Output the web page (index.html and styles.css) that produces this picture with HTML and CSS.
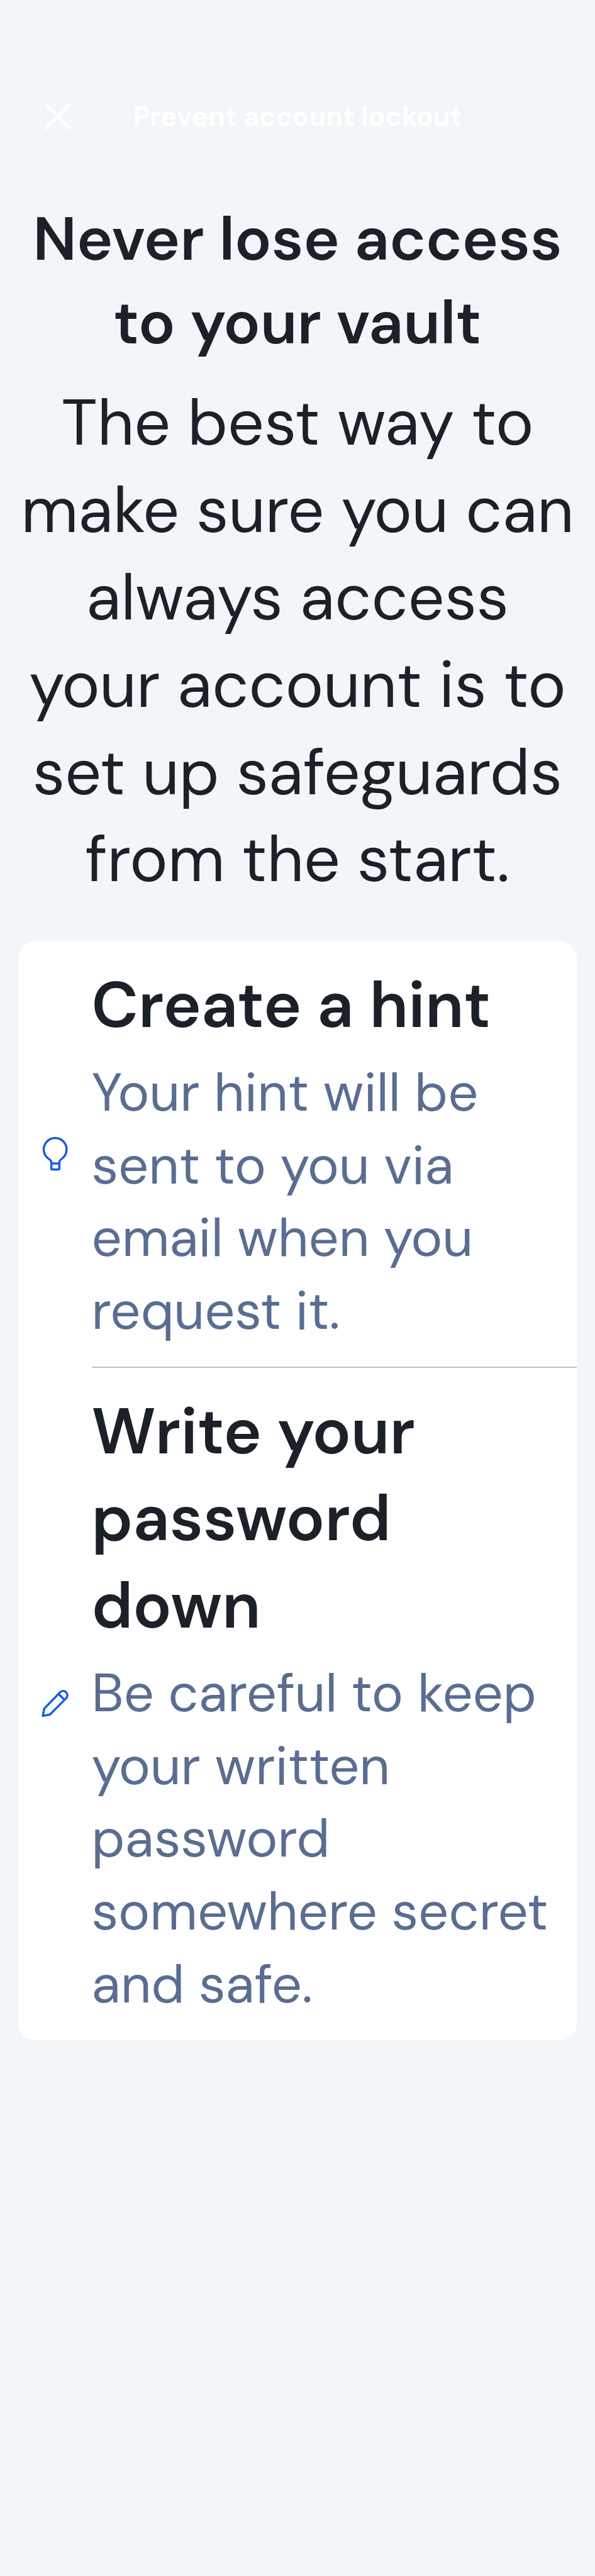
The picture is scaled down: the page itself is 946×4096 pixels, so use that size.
FILE: index.html
```html
<!DOCTYPE html>
<html lang="en">
<head>
<meta charset="utf-8">
<title>Prevent account lockout</title>
<link rel="stylesheet" href="styles.css">
</head>
<body>
<header class="nav">
  <svg class="icon close" viewBox="0 0 72 72" aria-label="Close"><path d="M12.3 12.3 59.7 59.7M59.7 12.3 12.3 59.7"/></svg>
  <div class="nav-title">Prevent account lockout</div>
</header>
<main>
  <h1 class="title">Never lose access<br>to your vault</h1>
  <p class="intro">The best way to<br>make sure you can<br>always access<br>your account is to<br>set up safeguards<br>from the start.</p>
  <section class="card">
    <div class="row">
      <svg class="icon" viewBox="11.9 24.5 72 72"><path d="M41.1 77.6V75.5C41.1 71.5 38 69.8 34.5 67.5A22.5 22.5 0 1 1 62.9 67.5C59.5 69.8 56.9 71.5 56.9 75.5V77.6M41.1 77.6H56.9V87.6a2 2 0 0 1-2 2H43.1a2 2 0 0 1-2-2Z"/></svg>
      <div class="content">
        <h2 class="heading">Create a hint</h2>
        <p class="text">Your hint will be<br>sent to you via<br>email when you<br>request it.</p>
      </div>
    </div>
    <div class="row">
      <svg class="icon" viewBox="11.9 24.6 72 72"><path d="M24.4 84.5 27.1 70.2 58.4 38A8.3 8.3 0 0 1 70.2 49.8L38.4 81.8ZM55.4 41.4 67 53"/></svg>
      <div class="content">
        <h2 class="heading">Write your<br>password<br>down</h2>
        <p class="text">Be careful to keep<br>your written<br>password<br>somewhere secret<br>and safe.</p>
      </div>
    </div>
  </section>
</main>
</body>
</html>
```
FILE: styles.css
```css
* { box-sizing: border-box; }
body {
  margin: 0;
  min-height: 4096px;
  background: #f2f6f9;
  color: #1b2029;
  font-family: "DM Sans", Lato, "Open Sans", sans-serif;
}
h1, h2, p { margin: 0; font-weight: 400; white-space: nowrap; }
.nav {
  display: grid;
  grid-template-columns: 1fr auto 1fr;
  align-items: center;
  height: 213.5px;
  padding-top: 155.5px;
  color: #fff;
}
.nav-title { font-size: 43.5px; line-height: 58px; font-weight: 700; white-space: nowrap; }
.icon {
  width: 58.2px;
  height: 58.2px;
  fill: none;
  stroke: #175ddc;
  stroke-width: 4.3;
  stroke-linejoin: round;
}
.close { margin-left: 62.8px; stroke: #fff; stroke-width: 5.4; stroke-linecap: round; }
.title {
  padding-top: 100.5px;
  font-size: 97px;
  line-height: 132.8px;
  font-weight: 600;
  text-align: center;
}
.intro {
  padding-top: 24.8px;
  font-size: 101.9px;
  line-height: 138.8px;
  text-align: center;
}
.card {
  margin: 60.3px 29px 0;
  background: #fff;
  border-radius: 27px;
}
.row { display: grid; grid-template-columns: 116.5px 1fr; align-items: center; }
.row .icon { justify-self: center; }
.content { padding: 32.5px 0 30.6px; }
.row:first-child .content { border-bottom: 2px solid #c3c3c5; }
.heading { font-size: 101.9px; line-height: 138.8px; font-weight: 600; }
.text { padding-top: 11.3px; font-size: 84.8px; line-height: 115.6px; color: #5a6d91; }
```
